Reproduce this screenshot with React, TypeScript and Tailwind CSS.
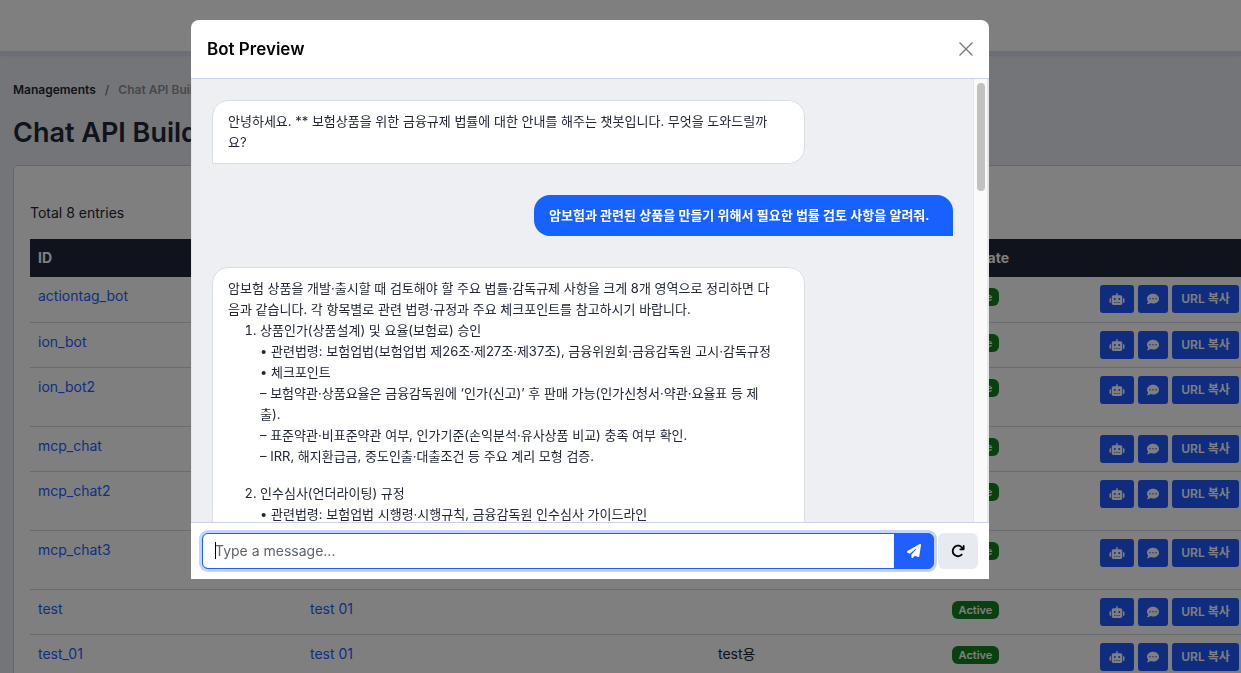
import { FaArrowRotateRight, FaCommentDots, FaPaperPlane, FaRobot } from "react-icons/fa6";

type Bot = {
  id: string;
  name?: string;
  description?: string;
  tall?: boolean;
};

const bots: Bot[] = [
  { id: "actiontag_bot" },
  { id: "ion_bot" },
  { id: "ion_bot2", tall: true },
  { id: "mcp_chat" },
  { id: "mcp_chat2", tall: true },
  { id: "mcp_chat3", tall: true },
  { id: "test", name: "test 01" },
  { id: "test_01", name: "test 01", description: "test용" },
];

const answer = [
  {
    title: "상품인가(상품설계) 및 요율(보험료) 승인",
    lines: [
      "• 관련법령: 보험업법(보험업법 제26조·제27조·제37조), 금융위원회·금융감독원 고시·감독규정",
      "• 체크포인트",
      "– 보험약관·상품요율은 금융감독원에 ‘인가(신고)’ 후 판매 가능(인가신청서·약관·요율표 등 제\n출).",
      "– 표준약관·비표준약관 여부, 인가기준(손익분석·유사상품 비교) 충족 여부 확인.",
      "– IRR, 해지환급금, 중도인출·대출조건 등 주요 계리 모형 검증.",
    ],
  },
  {
    title: "인수심사(언더라이팅) 규정",
    lines: ["• 관련법령: 보험업법 시행령·시행규칙, 금융감독원 인수심사 가이드라인"],
  },
];

const BotRow = ({ bot }: { bot: Bot }) => (
  <tr className={`border-b border-[#d1d7e0] align-top ${bot.tall ? "h-[59px]" : "h-[45px]"}`}>
    <td className="px-2 pt-[9px]">
      <a href="#" className="text-[#1f5eff]">{bot.id}</a>
    </td>
    <td className="px-2 pt-[9px]">
      {bot.name && <a href="#" className="text-[#1f5eff]">{bot.name}</a>}
    </td>
    <td className="px-2 pt-[9px]">{bot.description}</td>
    <td className="px-2 pt-[11px]">
      <span className="block h-[18px] w-[47px] rounded-md bg-[#10831f] text-center text-[11px] leading-[18px] font-semibold text-white">
        Active
      </span>
    </td>
    <td className="px-2 pt-2">
      <div className="flex gap-1 text-white">
        <button aria-label="Preview" className="flex h-7 w-[34px] items-center justify-center rounded-[3px] bg-[#2158ff]">
          <FaRobot className="h-3 w-4" />
        </button>
        <button aria-label="Chat" className="flex h-7 w-[30px] items-center justify-center rounded-[3px] bg-[#2158ff]">
          <FaCommentDots className="size-3" />
        </button>
        <button className="h-7 w-[67px] rounded-[3px] bg-[#2158ff] text-xs font-semibold whitespace-nowrap">
          URL 복사
        </button>
      </div>
    </td>
  </tr>
);

const BotList = () => (
  <div className="min-h-screen bg-[#e9ebf0]">
    <header className="h-[51px] bg-white shadow-[0_5px_0_#d5dcee,0_6px_3px_#dfe3ec]" />
    <main className="pt-[29px] pl-[13px]">
      <nav aria-label="Breadcrumb" className="flex h-5 items-center gap-[9px] text-xs font-semibold">
        <a href="#">Managements</a>
        <span className="text-[#7d8189]">/</span>
        <span className="text-[#8b9098]">Chat API Builder</span>
      </nav>
      <h1 className="mt-[15px] text-[27px] leading-9 font-semibold">Chat API Builder</h1>
      <section className="mt-[14px] w-max rounded-tl border border-[#c9cfdf] bg-white px-4 pt-[37px]">
        <p className="leading-5">Total 8 entries</p>
        <table className="mt-4 w-[1218px] table-fixed text-left">
          <colgroup>
            <col className="w-[272px]" />
            <col className="w-[408px]" />
            <col className="w-[234px]" />
            <col className="w-[148px]" />
            <col />
          </colgroup>
          <thead>
            <tr className="h-[38px] bg-[#212736] text-white">
              <th className="px-2">ID</th>
              <th className="px-2" />
              <th className="px-2" />
              <th className="px-2">Activate</th>
              <th className="px-2" />
            </tr>
          </thead>
          <tbody>
            {bots.map((bot) => (
              <BotRow key={bot.id} bot={bot} />
            ))}
          </tbody>
        </table>
      </section>
    </main>
  </div>
);

const Messages = () => (
  <div className="flex min-w-0 flex-1 flex-col items-start gap-[31px] overflow-hidden px-5 pt-[21px] text-[13px] leading-[21px]">
    <div className="w-4/5 shrink-0 rounded-2xl rounded-bl-none border border-[#d8dde5] bg-white px-[15px] py-[10px]">
      안녕하세요. ** 보험상품을 위한 금융규제 법률에 대한 안내를 해주는 챗봇입니다. 무엇을 도와드릴까
      <br />
      요?
    </div>
    <div className="min-w-[419px] shrink-0 self-end rounded-2xl rounded-br-none bg-[#1761ff] px-[15px] py-[10px] font-semibold text-white">
      암보험과 관련된 상품을 만들기 위해서 필요한 법률 검토 사항을 알려줘.
    </div>
    <div className="w-4/5 shrink-0 rounded-2xl rounded-bl-none border border-[#d8dde5] bg-white px-[15px] py-[10px]">
      <p>
        암보험 상품을 개발·출시할 때 검토해야 할 주요 법률·감독규제 사항을 크게 8개 영역으로 정리하면 다
        <br />
        음과 같습니다. 각 항목별로 관련 법령·규정과 주요 체크포인트를 참고하시기 바랍니다.
      </p>
      <ol className="list-decimal pl-8">
        {answer.map((item) => (
          <li key={item.title} className="mb-4">
            {item.title}
            {item.lines.map((line) => (
              <p key={line} className="whitespace-pre-line">{line}</p>
            ))}
          </li>
        ))}
      </ol>
    </div>
  </div>
);

const BotPreview = () => (
  <div className="fixed inset-0 flex items-start justify-center bg-black/50 pt-5 pr-[61px]">
    <div role="dialog" aria-label="Bot Preview" className="w-full max-w-[798px] overflow-hidden rounded-t-lg bg-white">
      <div className="flex h-[59px] items-center justify-between border-b border-[#cbd3e6] px-4">
        <h2 className="text-[17px] font-semibold text-black">Bot Preview</h2>
        <button aria-label="Close">
          <svg viewBox="0 0 14 14" className="size-[14px] stroke-[#777]" fill="none" strokeWidth="1.3">
            <path d="M0.5 0.5l13 13M13.5 0.5l-13 13" />
          </svg>
        </button>
      </div>

      <div className="flex h-[443px] border-x border-[#e4e6ea] bg-[#edeff3]">
        <Messages />
        {/* scrollbar */}
        <div className="w-[15px] border-x border-[#e4e6ea] bg-[#fafafa] px-[3px] pt-1">
          <div className="h-[108px] w-2 rounded-full bg-[#c1c1c1]" />
        </div>
      </div>

      <form className="flex gap-1 border-t border-[#cbd3e6] px-[11px] py-[10px]">
        <div className="relative flex h-9 flex-1 rounded-md border border-[#1f5eff] bg-[#1f5eff] shadow-[0_0_0_3px_#c5d3ff]">
          <input
            autoFocus
            type="text"
            aria-label="Message"
            placeholder="Type a message..."
            className="min-w-0 flex-1 rounded-l-[5px] bg-white px-3 caret-transparent placeholder-[#5d6470] outline-none"
          />
          <span className="absolute top-2 left-3 h-[17px] w-px bg-black" />
          <button type="button" aria-label="Send" className="flex w-[39px] items-center justify-center text-white">
            <FaPaperPlane className="size-[14px]" />
          </button>
        </div>
        <button type="button" aria-label="Reset" className="flex h-9 w-10 items-center justify-center rounded-md bg-[#e7eaf1] text-black">
          <FaArrowRotateRight className="size-[14px]" />
        </button>
      </form>
    </div>
  </div>
);

export default function App() {
  return (
    <div className="h-screen overflow-hidden font-['Inter','Noto_Sans_CJK_KR',sans-serif] text-sm text-[#212736]">
      <BotList />
      <BotPreview />
    </div>
  );
}
